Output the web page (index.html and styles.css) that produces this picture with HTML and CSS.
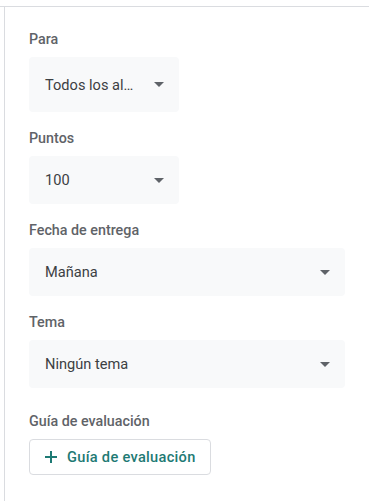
FILE: index.html
```html
<!DOCTYPE html>
<html lang="es">
<head>
<meta charset="utf-8">
<link rel="stylesheet" href="styles.css">
</head>
<body>
<div class="frame">
  <div class="panel">
    <div class="field">
      <div class="label">Para</div>
      <div class="select select-narrow select-tall"><span class="value">Todos los al…</span><span class="arrow"></span></div>
    </div>
    <div class="field">
      <div class="label">Puntos</div>
      <div class="select select-narrow"><span class="value">100</span><span class="arrow"></span></div>
    </div>
    <div class="field">
      <div class="label">Fecha de entrega</div>
      <div class="select"><span class="value">Mañana</span><span class="arrow"></span></div>
    </div>
    <div class="field">
      <div class="label">Tema</div>
      <div class="select"><span class="value">Ningún tema</span><span class="arrow"></span></div>
    </div>
    <div class="field field-rubric">
      <div class="label">Guía de evaluación</div>
      <button class="add-btn" type="button">
        <svg class="plus" width="14" height="14" viewBox="0 0 14 14"><path d="M7 1v12M1 7h12" stroke="currentColor" stroke-width="2" fill="none"/></svg>
        <span>Guía de evaluación</span>
      </button>
    </div>
  </div>
</div>
</body>
</html>
```

FILE: styles.css
```css
html, body {
  margin: 0;
  padding: 0;
  background: #ffffff;
  font-family: Roboto, "Liberation Sans", Arial, sans-serif;
}

.frame {
  margin-top: 6px;
  border-top: 1px solid #dadce0;
  height: 494px;
}

.panel {
  margin-left: 4px;
  border-left: 1px solid #dadce0;
  height: 100%;
  padding: 22px 0 0 24px;
  box-sizing: border-box;
  display: flex;
  flex-direction: column;
  gap: 16px;
}

.field {
  display: flex;
  flex-direction: column;
  gap: 8px;
}

.field-rubric {
  margin-top: 7px;
}

.label {
  font-size: 14.3px;
  line-height: 20px;
  font-weight: 500;
  color: #5f6368;
}

.select {
  width: 316px;
  height: 48px;
  box-sizing: border-box;
  background: #f8f9fa;
  border-radius: 4px;
  display: flex;
  align-items: center;
  justify-content: space-between;
  padding: 0 15px 0 16px;
}

.select-narrow {
  width: 150px;
}

.select-tall {
  height: 55px;
}

.value {
  font-size: 14.6px;
  color: #3c4043;
  white-space: nowrap;
}

.arrow {
  width: 0;
  height: 0;
  border-left: 5px solid transparent;
  border-right: 5px solid transparent;
  border-top: 5px solid #5f6368;
}

.add-btn {
  align-self: flex-start;
  width: 182px;
  height: 36px;
  box-sizing: border-box;
  border: 1px solid #dadce0;
  border-radius: 4px;
  background: #ffffff;
  display: flex;
  align-items: center;
  gap: 9px;
  padding: 0 0 0 14px;
  font-family: Roboto, "Liberation Sans", Arial, sans-serif;
  font-size: 14.6px;
  font-weight: 500;
  letter-spacing: 0.3px;
  color: #1e7a74;
}

.plus {
  color: #1e7a74;
  flex: none;
}
```
